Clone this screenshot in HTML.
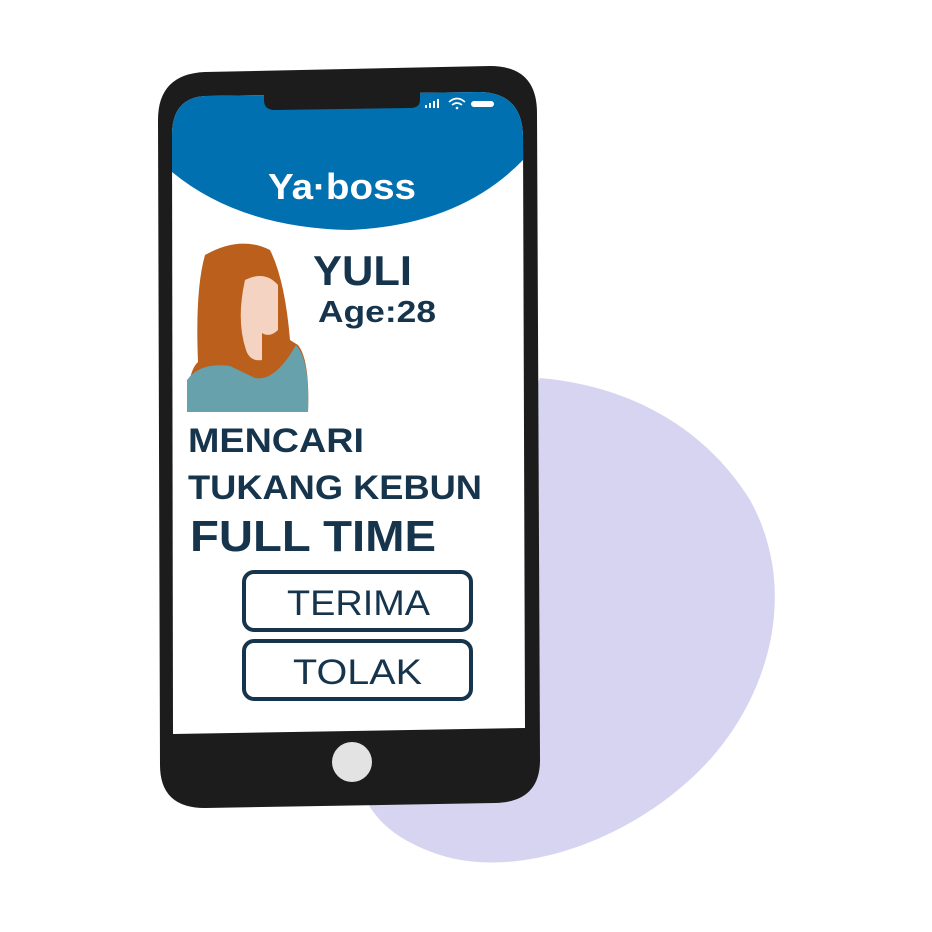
<!DOCTYPE html>
<html><head><style>
html,body{margin:0;padding:0;background:#fff;width:932px;height:932px;overflow:hidden}
text{font-family:"Liberation Sans",sans-serif;font-weight:bold;fill:#16354d}
</style></head><body>
<svg width="932" height="932" viewBox="0 0 932 932" xmlns="http://www.w3.org/2000/svg">
<path d="M540 378 C620 385 700 420 750 500 C800 590 770 700 700 770 C630 840 520 880 440 855 C380 835 350 800 360 740 L540 378Z" fill="#d6d4f0"/>
<path d="M205 72 L490 66 Q537 66 537 113 L540 760 Q540 802 495 803 L205 808 Q160 808 160 765 L158 120 Q158 74 205 72Z" fill="#1c1c1c"/>
<path d="M205 96 L478 92 Q522 92 523 136 L525 728 L173 734 L172 135 Q172 98 205 96Z" fill="#fff"/>
<path d="M205 96 L478 92 Q522 92 523 136 L523 160 Q460 225 350 230 Q240 228 172 172 L172 135 Q172 98 205 96Z" fill="#0070b0"/>
<path d="M264 94 L420 92 L420 100 Q420 108 410 108 L275 110 Q264 110 264 100Z" fill="#1c1c1c"/>
<rect x="425" y="105" width="2" height="3" fill="#fff"/><rect x="429" y="103" width="2" height="5" fill="#fff"/><rect x="433" y="101" width="2" height="7" fill="#fff"/><rect x="437" y="99" width="2" height="9" fill="#fff"/>
<path d="M449 102 Q457 95 465 102 M452 105 Q457 101 462 105" stroke="#fff" stroke-width="1.6" fill="none"/><circle cx="457" cy="108" r="1.3" fill="#fff"/>
<rect x="471" y="101" width="23" height="6" rx="3" fill="#fff"/>
<text x="268" y="199" font-size="36" textLength="148" lengthAdjust="spacingAndGlyphs" style="fill:#fff">Ya·boss</text>
<path d="M205 255 Q240 235 270 250 Q285 280 290 340 L298 345 Q310 360 308 412 L187 412 Q187 372 198 362 Q195 290 205 255Z" fill="#bb5f1c"/>
<path d="M245 280 Q265 270 278 285 L278 330 Q270 338 262 333 L262 360 Q250 362 246 350 Q236 320 245 280Z" fill="#f4d3c3"/>
<path d="M187 380 Q200 362 230 366 L255 378 Q275 382 296 345 Q310 360 308 412 L187 412Z" fill="#67a1ab"/>
<text x="313" y="285" font-size="42" textLength="99" lengthAdjust="spacingAndGlyphs">YULI</text>
<text x="318" y="322" font-size="31" textLength="118" lengthAdjust="spacingAndGlyphs">Age:28</text>
<text x="188" y="452" font-size="34" textLength="176" lengthAdjust="spacingAndGlyphs">MENCARI</text>
<text x="188" y="499" font-size="34" textLength="294" lengthAdjust="spacingAndGlyphs">TUKANG KEBUN</text>
<text x="190" y="551" font-size="44" textLength="246" lengthAdjust="spacingAndGlyphs">FULL TIME</text>
<rect x="244" y="572" width="227" height="58" rx="10" fill="none" stroke="#16354d" stroke-width="4"/>
<rect x="244" y="641" width="227" height="58" rx="10" fill="none" stroke="#16354d" stroke-width="4"/>
<text x="287" y="615" font-size="35" textLength="143" lengthAdjust="spacingAndGlyphs" style="font-weight:normal">TERIMA</text>
<text x="293" y="684" font-size="35" textLength="129" lengthAdjust="spacingAndGlyphs" style="font-weight:normal">TOLAK</text>
<circle cx="352" cy="762" r="20" fill="#e3e3e3"/>
</svg>
</body></html>
